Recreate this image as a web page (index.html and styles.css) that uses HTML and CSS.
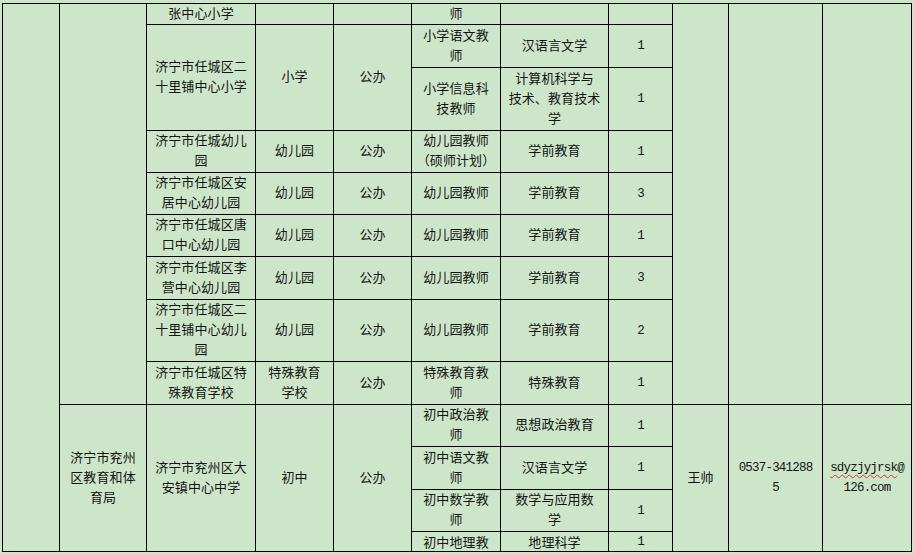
FILE: index.html
```html
<!DOCTYPE html>
<html lang="zh-CN">
<head>
<meta charset="utf-8">
<title>招聘岗位表</title>
<link rel="stylesheet" href="styles.css">
</head>
<body>
<div class="sheet">
  <div class="cell c1 r1to13"></div>
  <div class="cell c2 r1to9"></div>
  <div class="cell c2 r10to13">济宁市兖州<br>区教育和体<br>育局</div>

  <div class="cell c3 r1">张中心小学</div>
  <div class="cell c4 r1"></div>
  <div class="cell c5 r1"></div>
  <div class="cell c6 r1">师</div>
  <div class="cell c7 r1"></div>
  <div class="cell c8 r1"></div>

  <div class="cell c3 r2to3">济宁市任城区二<br>十里铺中心小学</div>
  <div class="cell c4 r2to3">小学</div>
  <div class="cell c5 r2to3">公办</div>
  <div class="cell c6 r2">小学语文教<br>师</div>
  <div class="cell c7 r2">汉语言文学</div>
  <div class="cell c8 r2 num">1</div>
  <div class="cell c6 r3">小学信息科<br>技教师</div>
  <div class="cell c7 r3">计算机科学与<br>技术、教育技术<br>学</div>
  <div class="cell c8 r3 num">1</div>

  <div class="cell c3 r4">济宁市任城幼儿<br>园</div>
  <div class="cell c4 r4">幼儿园</div>
  <div class="cell c5 r4">公办</div>
  <div class="cell c6 r4">幼儿园教师<br>（硕师计划）</div>
  <div class="cell c7 r4">学前教育</div>
  <div class="cell c8 r4 num">1</div>

  <div class="cell c3 r5">济宁市任城区安<br>居中心幼儿园</div>
  <div class="cell c4 r5">幼儿园</div>
  <div class="cell c5 r5">公办</div>
  <div class="cell c6 r5">幼儿园教师</div>
  <div class="cell c7 r5">学前教育</div>
  <div class="cell c8 r5 num">3</div>

  <div class="cell c3 r6">济宁市任城区唐<br>口中心幼儿园</div>
  <div class="cell c4 r6">幼儿园</div>
  <div class="cell c5 r6">公办</div>
  <div class="cell c6 r6">幼儿园教师</div>
  <div class="cell c7 r6">学前教育</div>
  <div class="cell c8 r6 num">1</div>

  <div class="cell c3 r7">济宁市任城区李<br>营中心幼儿园</div>
  <div class="cell c4 r7">幼儿园</div>
  <div class="cell c5 r7">公办</div>
  <div class="cell c6 r7">幼儿园教师</div>
  <div class="cell c7 r7">学前教育</div>
  <div class="cell c8 r7 num">3</div>

  <div class="cell c3 r8">济宁市任城区二<br>十里铺中心幼儿<br>园</div>
  <div class="cell c4 r8">幼儿园</div>
  <div class="cell c5 r8">公办</div>
  <div class="cell c6 r8">幼儿园教师</div>
  <div class="cell c7 r8">学前教育</div>
  <div class="cell c8 r8 num">2</div>

  <div class="cell c3 r9">济宁市任城区特<br>殊教育学校</div>
  <div class="cell c4 r9">特殊教育<br>学校</div>
  <div class="cell c5 r9">公办</div>
  <div class="cell c6 r9">特殊教育教<br>师</div>
  <div class="cell c7 r9">特殊教育</div>
  <div class="cell c8 r9 num">1</div>

  <div class="cell c9 r1to9"></div>
  <div class="cell c10 r1to9"></div>
  <div class="cell c11 r1to9"></div>

  <div class="cell c3 r10to13">济宁市兖州区大<br>安镇中心中学</div>
  <div class="cell c4 r10to13">初中</div>
  <div class="cell c5 r10to13">公办</div>
  <div class="cell c6 r10">初中政治教<br>师</div>
  <div class="cell c7 r10">思想政治教育</div>
  <div class="cell c8 r10 num">1</div>
  <div class="cell c6 r11">初中语文教<br>师</div>
  <div class="cell c7 r11">汉语言文学</div>
  <div class="cell c8 r11 num">1</div>
  <div class="cell c6 r12">初中数学教<br>师</div>
  <div class="cell c7 r12">数学与应用数<br>学</div>
  <div class="cell c8 r12 num">1</div>
  <div class="cell c6 r13">初中地理教</div>
  <div class="cell c7 r13">地理科学</div>
  <div class="cell c8 r13 num">1</div>

  <div class="cell c9 r10to13">王帅</div>
  <div class="cell c10 r10to13 num">0537-341288<br>5</div>
  <div class="cell c11 r10to13 num"><div class="lines"><span class="spell">sdyzjyjrsk</span>@<br>126.com</div></div>
</div>
</body>
</html>
```
FILE: styles.css
```css
html, body {
  margin: 0;
  padding: 0;
  background: #cde6ca;
}

body {
  font-family: "Noto Sans CJK SC", "Noto Sans", sans-serif;
  font-size: 13px;
  line-height: 20px;
  letter-spacing: 0.1px;
  color: #141414;
}

.sheet {
  display: grid;
  width: max-content;
  margin: 3px 0 0 2px;
  padding: 1px;
  gap: 1px;
  background: #000;
  grid-template-columns: 56px 86px 108px 77px 77px 88px 107px 63px 55px 93px 88px;
  grid-template-rows: 20px 42px 62px 41px 41px 41px 42px 61px 42px 41px 42px 41px 19px;
}

.cell {
  background: #cde6ca;
  display: flex;
  align-items: center;
  justify-content: center;
  text-align: center;
  white-space: nowrap;
  overflow: hidden;
  padding-bottom: 3px;
}

.num {
  font-family: "Liberation Mono", "Courier New", monospace;
  font-size: 12.5px;
  letter-spacing: -0.8px;
  padding-bottom: 0;
}

.lines {
  text-align: center;
}

.spell {
  text-decoration: underline wavy #d8342e;
  text-decoration-thickness: 1px;
  text-underline-offset: 3px;
}

.c1 { grid-column: 1; }
.c2 { grid-column: 2; }
.c3 { grid-column: 3; }
.c4 { grid-column: 4; }
.c5 { grid-column: 5; }
.c6 { grid-column: 6; }
.c7 { grid-column: 7; }
.c8 { grid-column: 8; }
.c9 { grid-column: 9; }
.c10 { grid-column: 10; }
.c11 { grid-column: 11; }

.r1 { grid-row: 1; }
.r2 { grid-row: 2; }
.r3 { grid-row: 3; }
.r4 { grid-row: 4; }
.r5 { grid-row: 5; }
.r6 { grid-row: 6; }
.r7 { grid-row: 7; }
.r8 { grid-row: 8; }
.r9 { grid-row: 9; }
.r10 { grid-row: 10; }
.r11 { grid-row: 11; }
.r12 { grid-row: 12; }
.r13 {
  grid-row: 13;
  line-height: 18px;
  padding-bottom: 0;
}

.r2to3 { grid-row: 2 / 4; }
.r1to9 { grid-row: 1 / 10; }
.r10to13 { grid-row: 10 / 14; }
.r1to13 { grid-row: 1 / 14; }
```
